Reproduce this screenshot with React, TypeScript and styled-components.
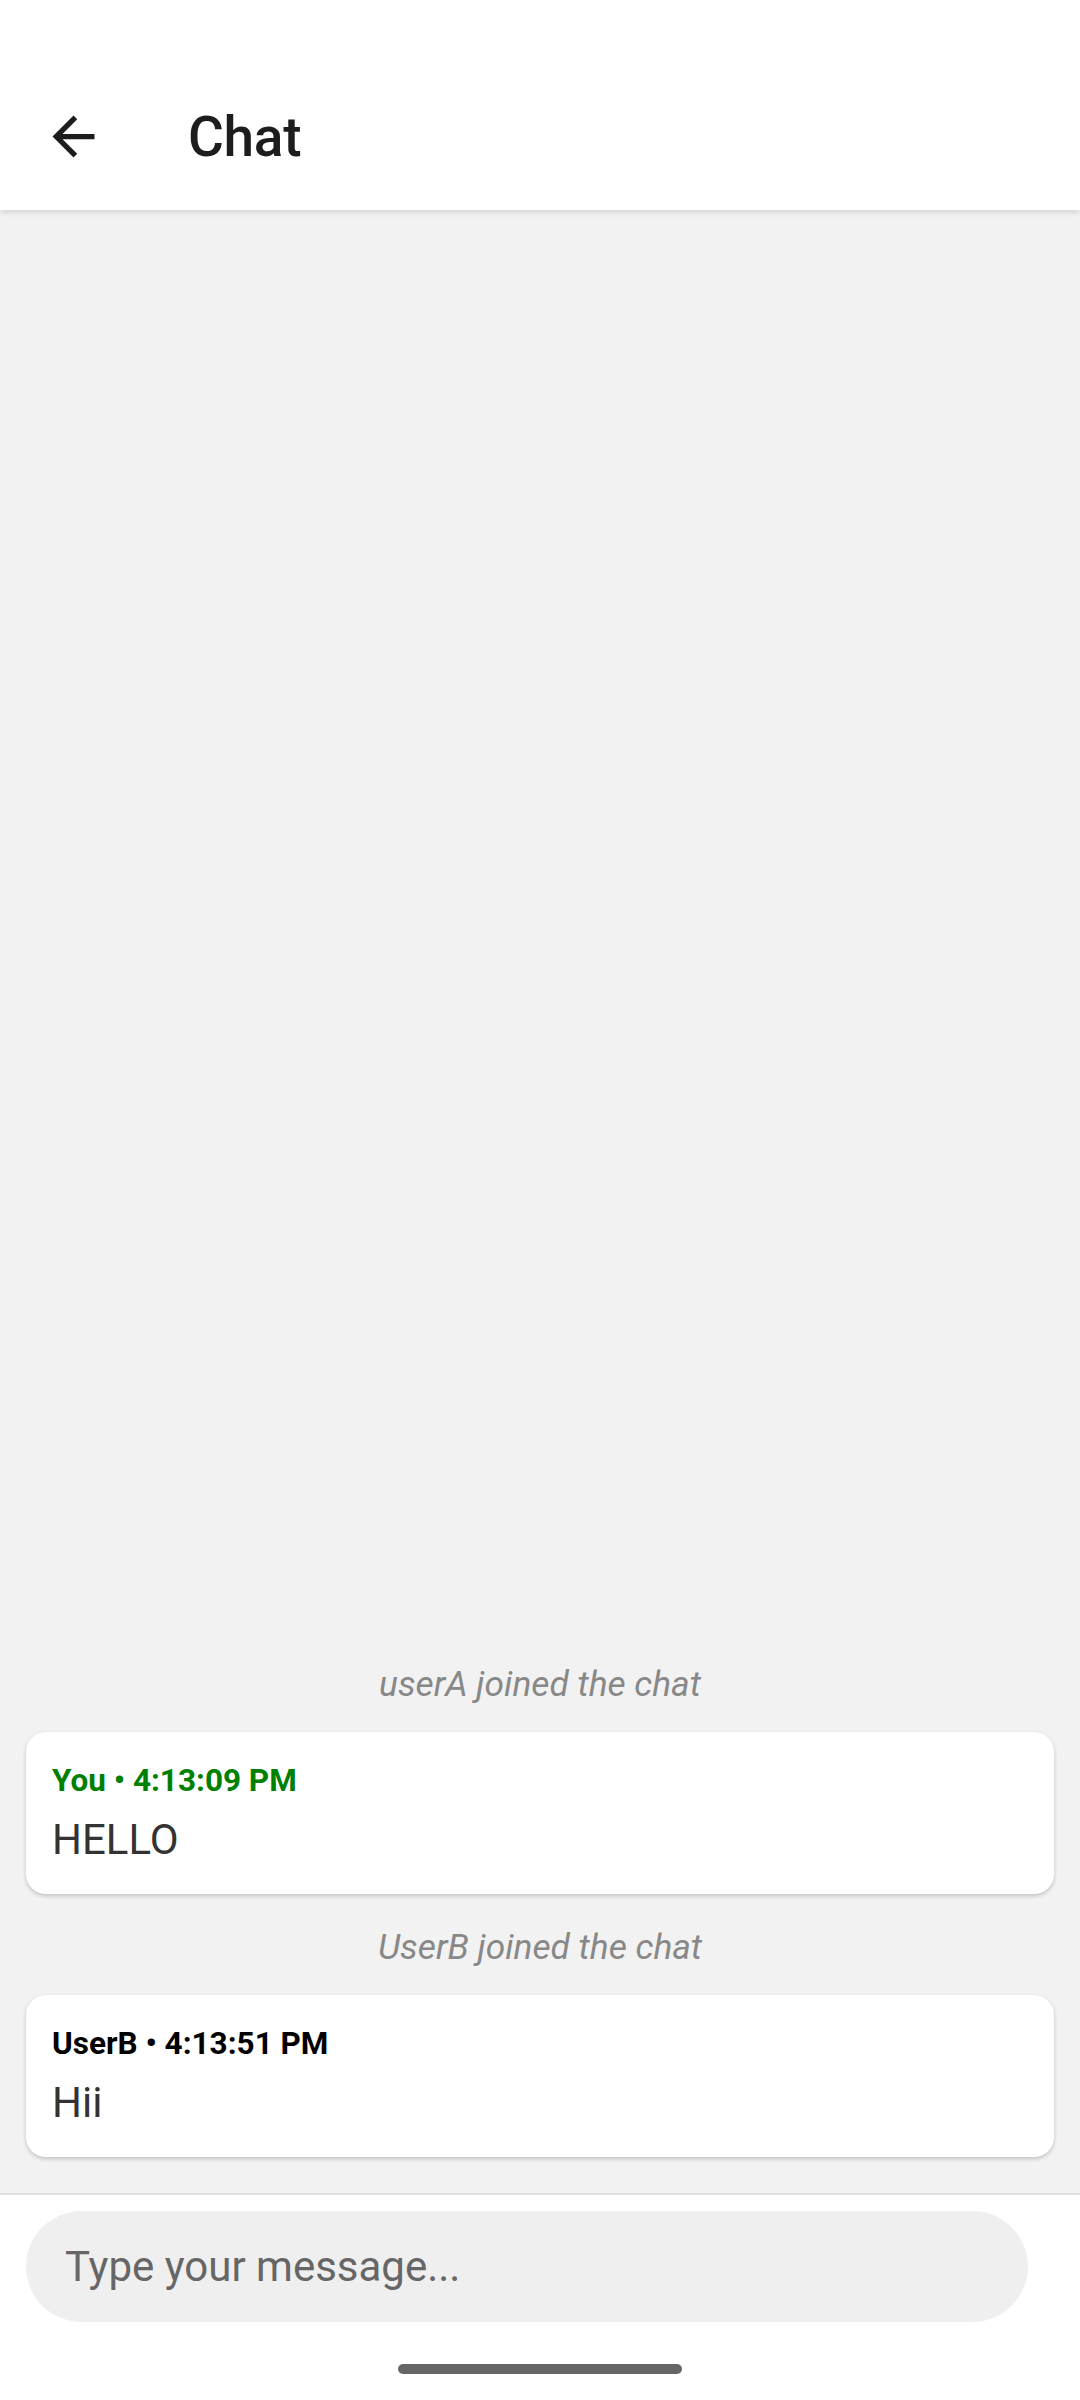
import React from "react";
import styled, { createGlobalStyle } from "styled-components";

const GlobalStyle = createGlobalStyle`
  html, body {
    margin: 0;
    padding: 0;
    background: #ffffff;
    font-family: Roboto, "Noto Sans", Arial, sans-serif;
  }
  * { box-sizing: border-box; }
`;

const Screen = styled.div`
  width: 1080px;
  height: 2400px;
  display: flex;
  flex-direction: column;
  background: #ffffff;
  overflow: hidden;
`;

const Header = styled.header`
  position: relative;
  z-index: 2;
  background: #ffffff;
  padding-top: 63px;
  box-shadow: 0 2px 6px rgba(0, 0, 0, 0.14);
`;

const Toolbar = styled.div`
  height: 147px;
  display: flex;
  align-items: center;
  padding-left: 42px;
`;

const BackButton = styled.button`
  width: 63px;
  height: 63px;
  padding: 0;
  border: none;
  background: transparent;
  display: flex;
  align-items: center;
  justify-content: center;
  color: #1d1d1d;
`;

const Title = styled.h1`
  margin: 0 0 0 83px;
  font-size: 55px;
  font-weight: 500;
  color: #1d1d1d;
  letter-spacing: -0.3px;
`;

const ChatArea = styled.main`
  flex: 1;
  background: #f2f2f2;
  display: flex;
  flex-direction: column;
  justify-content: flex-end;
  padding: 0 26px 36px;
`;

const SystemText = styled.div`
  margin: 32px 0 27px;
  text-align: center;
  font-size: 35.3px;
  font-style: italic;
  color: #888888;
`;

const Bubble = styled.div`
  background: #ffffff;
  border-radius: 20px;
  padding: 30px 26px 30px;
  box-shadow: 0 2px 4px rgba(0, 0, 0, 0.2);
`;

const Meta = styled.div<{ $mine?: boolean }>`
  font-size: 31.5px;
  font-weight: 700;
  color: ${(p) => (p.$mine ? "#008000" : "#000000")};
  margin-bottom: 16px;
`;

const Body = styled.div`
  font-size: 42px;
  color: #333333;
`;

const Footer = styled.footer`
  border-top: 2px solid #dedede;
  background: #ffffff;
  padding: 16px 52px 26px 26px;
  display: flex;
  flex-direction: column;
`;

const MessageInput = styled.input`
  height: 111px;
  width: 100%;
  border: none;
  outline: none;
  border-radius: 56px;
  background: #efefef;
  padding: 0 39px;
  font-family: Roboto, "Noto Sans", Arial, sans-serif;
  font-size: 42px;
  color: #333333;
  &::placeholder {
    color: #666666;
  }
`;

const HomeBar = styled.div`
  width: 284px;
  height: 10px;
  border-radius: 5px;
  background: #666666;
  margin: 42px 0 0 372px;
`;

type Item =
  | { kind: "system"; text: string }
  | { kind: "msg"; user: string; time: string; text: string; mine?: boolean };

const items: Item[] = [
  { kind: "system", text: "userA joined the chat" },
  { kind: "msg", user: "You", time: "4:13:09 PM", text: "HELLO", mine: true },
  { kind: "system", text: "UserB joined the chat" },
  { kind: "msg", user: "UserB", time: "4:13:51 PM", text: "Hii" },
];

export default function App() {
  return (
    <>
      <GlobalStyle />
      <Screen>
        <Header>
          <Toolbar>
            <BackButton aria-label="Back">
              <svg width="63" height="63" viewBox="0 0 24 24" fill="currentColor">
                <path d="M20 11H7.83l5.59-5.59L12 4l-8 8 8 8 1.41-1.41L7.83 13H20v-2z" />
              </svg>
            </BackButton>
            <Title>Chat</Title>
          </Toolbar>
        </Header>
        <ChatArea>
          {items.map((it, i) =>
            it.kind === "system" ? (
              <SystemText key={i}>{it.text}</SystemText>
            ) : (
              <Bubble key={i}>
                <Meta $mine={it.mine}>
                  {it.user} • {it.time}
                </Meta>
                <Body>{it.text}</Body>
              </Bubble>
            )
          )}
        </ChatArea>
        <Footer>
          <MessageInput placeholder="Type your message..." />
          <HomeBar />
        </Footer>
      </Screen>
    </>
  );
}
